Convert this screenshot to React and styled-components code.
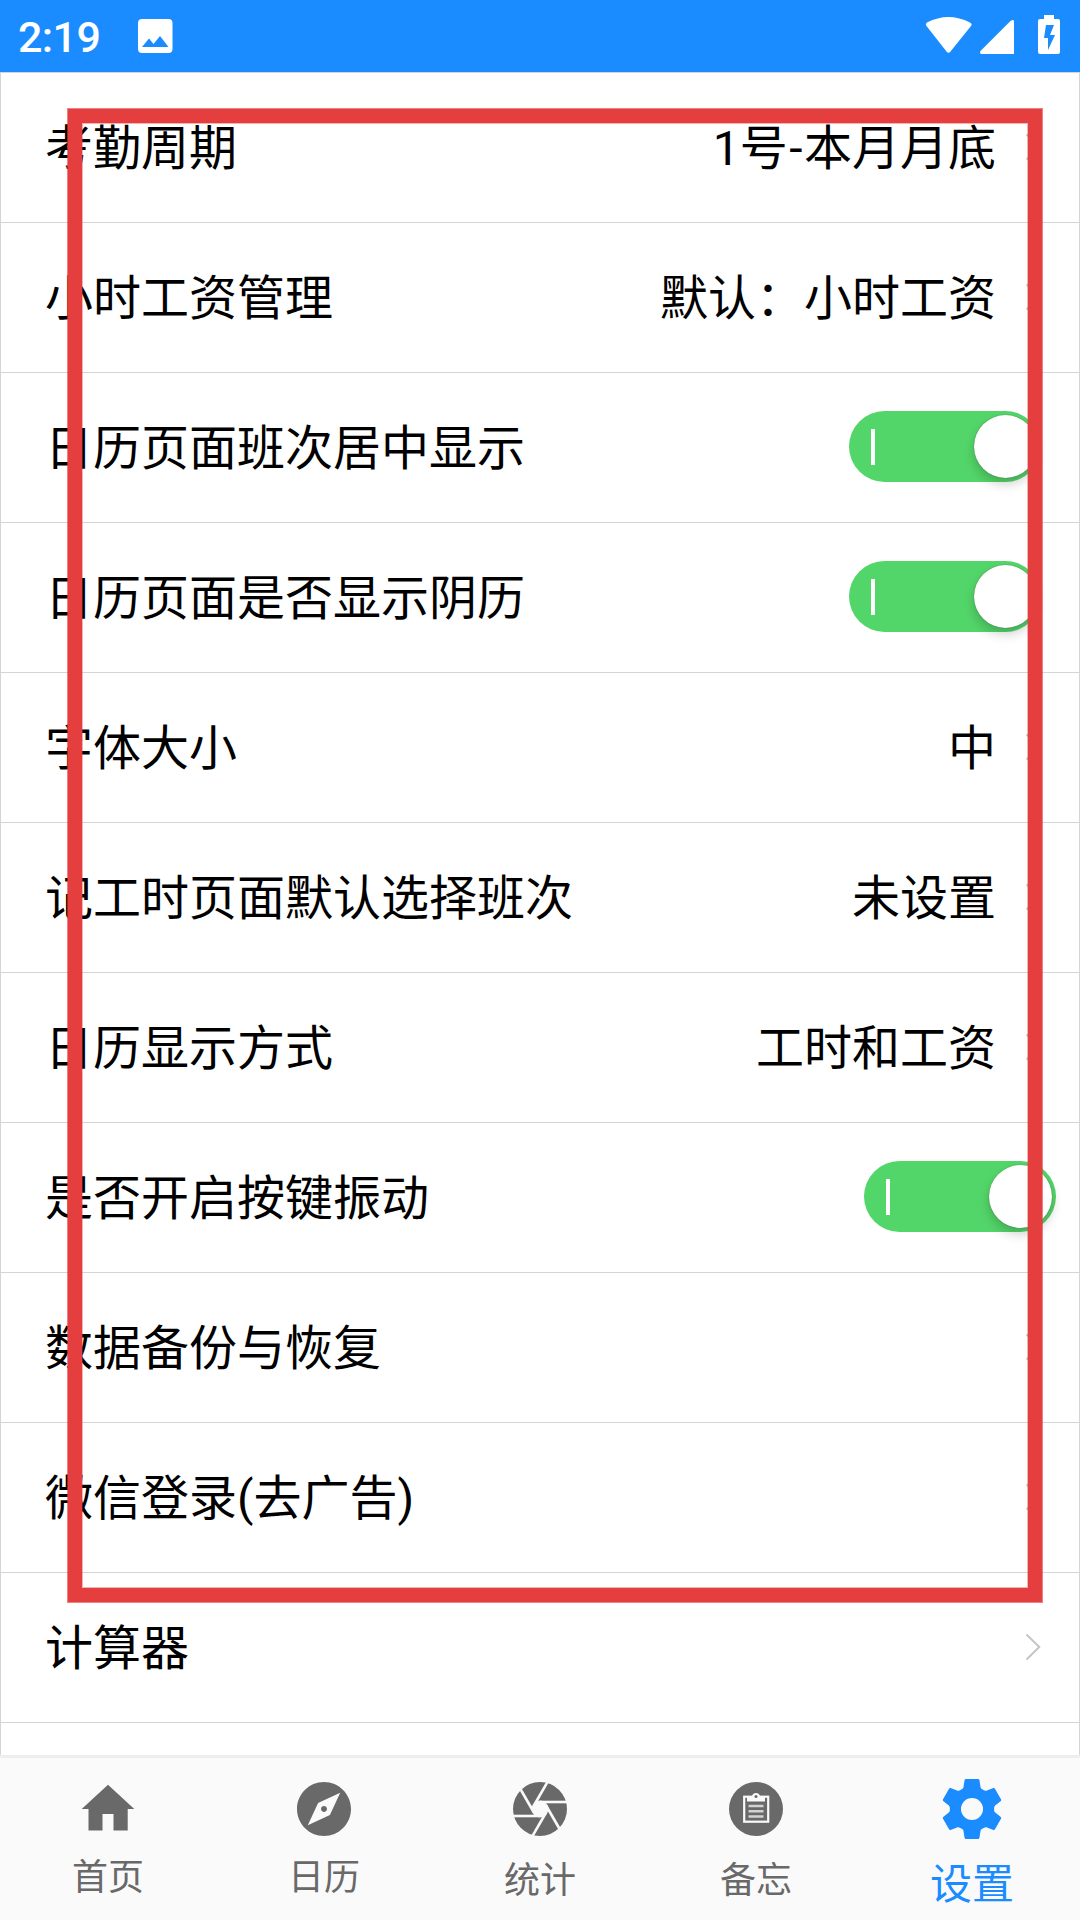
import React from 'react';
import styled, { createGlobalStyle, css } from 'styled-components';
import { MdExplore } from 'react-icons/md';

const GlobalStyle = createGlobalStyle`
  * {
    box-sizing: border-box;
  }

  body {
    margin: 0;
    background: #fff;
    font-family: Roboto, 'Noto Sans CJK SC', sans-serif;
  }
`;

const Screen = styled.div`
  position: relative;
  width: 1080px;
  height: 1920px;
  display: flex;
  flex-direction: column;
  overflow: hidden;
`;

const StatusBar = styled.header`
  flex: 0 0 72px;
  display: flex;
  align-items: center;
  padding: 0 20px 0 18px;
  background: #1a8cff;
  color: #fff;
`;

const Clock = styled.span`
  width: 120px;
  font-size: 43px;
  font-weight: 500;
  line-height: 60px;
  letter-spacing: -0.6px;
  padding-top: 2px;
`;

const StatusIcons = styled.div`
  margin-left: auto;
  display: flex;
`;

const List = styled.main`
  flex: 1;
  min-height: 0;
  overflow: hidden;
  border: 1px solid #d5d5d5;
  border-bottom: none;
`;

const Row = styled.div`
  height: 150px;
  display: flex;
  align-items: center;
  justify-content: space-between;
  padding: 0 ${(props) => props.$right}px 0 44px;
  border-bottom: 1px solid #d5d5d5;
  color: #000;
  font-size: 48px;
  line-height: 72px;
`;

const Label = styled.span`
  white-space: nowrap;
  padding-top: 2px;
`;

const Value = styled.div`
  display: flex;
  align-items: center;
  gap: 29px;
`;

const Dash = styled.span`
  margin: 0 1.5px;
`;

const Chevron = styled.svg`
  display: block;
  width: 16px;
  height: 28px;
  margin-bottom: 2px;
`;

const Track = styled.div`
  display: flex;
  align-items: center;
  justify-content: space-between;
  width: 192px;
  height: 71px;
  margin-bottom: 2px;
  padding: 0 4.5px 0 22px;
  border-radius: 36px;
  background: #53d669;
`;

const OnMark = styled.span`
  width: 3.5px;
  height: 36px;
  background: #fff;
`;

const Knob = styled.span`
  width: 63px;
  height: 63px;
  border-radius: 50%;
  background: #fff;
  box-shadow: 0 0 1px rgba(0, 0, 0, 0.5), 0 6px 12px rgba(0, 0, 0, 0.2);
`;

const TabBar = styled.nav`
  flex: 0 0 165px;
  display: flex;
  border-top: 3px solid #eee;
  background: #fafafa;
`;

const Tab = styled.div`
  flex: 1;
  display: flex;
  flex-direction: column;
  align-items: center;
  padding-top: 15px;
  color: #696969;
  font-size: 36px;

  svg {
    display: block;
    flex: none;
  }

  ${(props) =>
    props.$active &&
    css`
      color: #1a8cff;
      font-size: 42px;
    `}
`;

const IconSlot = styled.span`
  height: 72px;
  display: flex;
  align-items: center;
`;

const TabText = styled.span`
  line-height: 54px;
  padding-top: ${(props) => props.$offset}px;
`;

const Highlight = styled.div`
  position: absolute;
  left: 68px;
  top: 109px;
  width: 974px;
  height: 1493px;
  border: 14px solid #e43e3e;
  box-shadow: 0 0 0 1px rgba(228, 62, 62, 0.65), inset 0 0 0 1px rgba(228, 62, 62, 0.4);
`;

const turns = [0, 60, 120, 180, 240, 300];

const PictureIcon = () => (
  <svg width='36' height='36' viewBox='0 0 36 36'>
    <path
      fill='#fff'
      fillRule='evenodd'
      d='M4 1h26.500a4 4 0 0 1 4 4v26a4 4 0 0 1-4 4H4a4 4 0 0 1-4-4V5a4 4 0 0 1 4-4zM4 29h26.500l-8.500-11-6.500 8-4.500-5.500z'
    />
  </svg>
);

const StatusGlyphs = () => (
  <svg width='140' height='44' viewBox='920 14 140 44'>
    <g fill='#fff'>
      <path d='M926.500 26Q925 24 927 22.500Q948.500 11.500 970 22.500Q972.500 24 971 26L950.500 51.500Q948.500 54 946.500 51.500Z' />
      <path d='M1014 21.500V54H982Q979 54 980.500 51L1010.500 21Q1014 19 1014 21.500Z' />
      <path
        fillRule='evenodd'
        d='M1044 15h10v4h4q2 0 2 2v31q0 2-2 2h-18q-2 0-2-2V21q0-2 2-2h4zM1046 25l-2 13h4v12l7-15h-5l4-10z'
      />
    </g>
  </svg>
);

const HomeIcon = () => (
  <svg width='54' height='54' viewBox='81 1782 54 54' fill='currentColor'>
    <path d='M108 1784.800L134.300 1809H127.700V1830.500H113.500V1814H102.500V1830.500H88.500V1809H81.700Z' />
  </svg>
);

const ApertureIcon = () => (
  <svg width='54' height='54' viewBox='-27 -27 54 54'>
    <circle r='27' fill='currentColor' />
    <circle r='8.400' fill='#fafafa' />
    {turns.map((deg) => (
      <path key={deg} transform={`rotate(${deg})`} stroke='#fafafa' strokeWidth='2.600' d='M0-7H28' />
    ))}
  </svg>
);

const MemoIcon = () => (
  <svg width='54' height='54' viewBox='0 0 54 54' fill='none'>
    <circle cx='27' cy='27' r='27' fill='currentColor' />
    <rect x='15.200' y='14.700' width='24' height='25' stroke='#fafafa' strokeWidth='2.200' />
    <path fill='#fafafa' d='M18 14h5a4.200 4.200 0 0 1 8 0h5v5.500H18z' />
    <circle cx='27' cy='14.500' r='1.500' fill='currentColor' />
    <path stroke='#d2d2d2' strokeWidth='2.500' d='M19.500 24h15M19.500 29.300h15M19.500 34.500h15' />
  </svg>
);

const GearIcon = () => (
  <svg width='62' height='62' viewBox='-31 -31 62 62' fill='currentColor'>
    <circle r='22' />
    {turns.map((deg) => (
      <path
        key={deg}
        transform={`rotate(${deg})`}
        d='M-6-30H6Q7.200-30 7.400-29L8.600-21.500Q9-20 12-18.500H-12Q-9-20-8.600-21.500L-7.400-29Q-7.200-30-6-30Z'
      />
    ))}
    <circle r='11' fill='#fafafa' />
  </svg>
);

const Switch = () => (
  <Track>
    <OnMark />
    <Knob />
  </Track>
);

const Arrow = () => (
  <Chevron viewBox='0 0 16 28'>
    <path d='M1.500 1.500L14.300 14L1.500 26.500' fill='none' stroke='#c4c4c4' strokeWidth='1.900' />
  </Chevron>
);

const rows = [
  { label: '考勤周期', value: <>1号<Dash>-</Dash>本月月底</> },
  { label: '小时工资管理', value: '默认：小时工资' },
  { label: '日历页面班次居中显示', toggle: true },
  { label: '日历页面是否显示阴历', toggle: true },
  { label: '字体大小', value: '中' },
  { label: '记工时页面默认选择班次', value: '未设置' },
  { label: '日历显示方式', value: '工时和工资' },
  { label: '是否开启按键振动', toggle: true, right: 23 },
  { label: '数据备份与恢复' },
  { label: '微信登录(去广告)' },
  { label: '计算器' },
];

const tabs = [
  { text: '首页', icon: <HomeIcon />, offset: 6 },
  { text: '日历', icon: <MdExplore size={54} viewBox='2 2 20 20' />, offset: 6 },
  { text: '统计', icon: <ApertureIcon />, offset: 9 },
  { text: '备忘', icon: <MemoIcon />, offset: 9 },
  { text: '设置', icon: <GearIcon />, offset: 13, active: true },
];

const App = () => (
  <>
    <GlobalStyle />
    <Screen>
      <StatusBar>
        <Clock>2:19</Clock>
        <PictureIcon />
        <StatusIcons>
          <StatusGlyphs />
        </StatusIcons>
      </StatusBar>
      <List>
        {rows.map((row) => (
          <Row key={row.label} $right={row.right || 38}>
            <Label>{row.label}</Label>
            {row.toggle ? (
              <Switch />
            ) : (
              <Value>
                <Label>{row.value}</Label>
                <Arrow />
              </Value>
            )}
          </Row>
        ))}
      </List>
      <TabBar>
        {tabs.map((tab) => (
          <Tab key={tab.text} $active={tab.active}>
            <IconSlot>{tab.icon}</IconSlot>
            <TabText $offset={tab.offset}>{tab.text}</TabText>
          </Tab>
        ))}
      </TabBar>
      <Highlight />
    </Screen>
  </>
);

export default App;
